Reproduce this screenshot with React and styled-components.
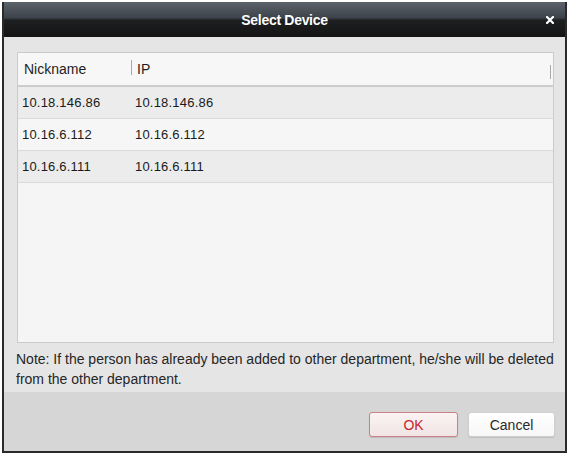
import React from "react";
import styled, { createGlobalStyle } from "styled-components";

const GlobalStyle = createGlobalStyle`
  html, body {
    margin: 0;
    padding: 0;
    background: #ffffff;
  }
  body {
    font-family: "Liberation Sans", Arial, sans-serif;
  }
`;

const Window = styled.div`
  display: flex;
  flex-direction: column;
  width: 561px;
  height: 449px;
  margin: 2px 0 0 2px;
  border: 2px solid #2a2a2a;
  border-top: none;
  box-sizing: content-box;
  overflow: hidden;
`;

const TitleBar = styled.div`
  position: relative;
  display: flex;
  align-items: center;
  justify-content: center;
  height: 35px;
  flex-shrink: 0;
  margin: 0 -2px;
  background: linear-gradient(
    to bottom,
    #5c636b 0%,
    #3d434a 45%,
    #1e1f21 52%,
    #141414 100%
  );
`;

const Title = styled.span`
  color: #ffffff;
  font-size: 14px;
  font-weight: bold;
  letter-spacing: -0.3px;
`;

const CloseButton = styled.button`
  position: absolute;
  right: 13px;
  top: 14px;
  width: 8px;
  height: 8px;
  padding: 0;
  border: none;
  background: none;
  display: flex;
`;

const Content = styled.div`
  display: flex;
  flex-direction: column;
  height: 355px;
  flex-shrink: 0;
  padding: 15px 11px 0 13px;
  box-sizing: border-box;
  background: #e5e5e5;
`;

const TablePanel = styled.div`
  display: flex;
  flex-direction: column;
  height: 291px;
  flex-shrink: 0;
  border: 1px solid #cbcbcb;
  background: #f5f5f5;
  box-sizing: border-box;
`;

const HeaderRow = styled.div`
  position: relative;
  display: flex;
  align-items: center;
  height: 34px;
  flex-shrink: 0;
  background: #f7f7f7;
  border-bottom: 2px solid #cdcdcd;
  box-sizing: border-box;
  font-size: 14px;
  color: #1e1e1e;
`;

const HeaderCell = styled.div`
  position: relative;
  width: ${(p) => p.width || "auto"};
  flex: ${(p) => (p.width ? "none" : 1)};
  padding-left: ${(p) => p.pad || "5px"};
  box-sizing: border-box;

  &::before {
    content: "";
    display: ${(p) => (p.divider ? "block" : "none")};
    position: absolute;
    left: 0;
    top: -1px;
    width: 1px;
    height: 15px;
    background: #a9a9a9;
  }
`;

const EdgeMark = styled.div`
  position: absolute;
  right: 2px;
  top: 12px;
  width: 1px;
  height: 14px;
  background: #a9a9a9;
`;

const Row = styled.div`
  display: flex;
  align-items: center;
  height: 32px;
  flex-shrink: 0;
  background: ${(p) => (p.alt ? "#ececec" : "#f6f6f6")};
  border-bottom: 1px solid #dadada;
  box-sizing: border-box;
  font-size: 13px;
  color: #1a1a1a;
  letter-spacing: 0.2px;
`;

const Cell = styled.div`
  width: ${(p) => p.width || "auto"};
  flex: ${(p) => (p.width ? "none" : 1)};
  padding-left: ${(p) => p.pad || "4px"};
  box-sizing: border-box;
`;

const Note = styled.p`
  margin: 6px 0 0 -1px;
  font-size: 14px;
  line-height: 20px;
  color: #262626;
  letter-spacing: 0;
`;

const Footer = styled.div`
  display: flex;
  justify-content: flex-end;
  align-items: flex-start;
  gap: 10px;
  flex: 1;
  padding: 20px 10px 0 0;
  background: #d6d6d6;
`;

const Button = styled.button`
  height: 25px;
  width: ${(p) => p.width};
  padding: 0;
  border-radius: 3px;
  font-family: "Liberation Sans", Arial, sans-serif;
  font-size: 14px;
  border: 1px solid ${(p) => (p.primary ? "#c98086" : "#cfcfcf")};
  color: ${(p) => (p.primary ? "#c1272d" : "#2a2a2a")};
  background: ${(p) =>
    p.primary
      ? "linear-gradient(to bottom, #fbf4f4, #f1e4e4)"
      : "linear-gradient(to bottom, #ffffff, #f7f7f7)"};
  box-shadow: 0 1px 1px rgba(0, 0, 0, 0.12);
`;

const devices = [
  { nickname: "10.18.146.86", ip: "10.18.146.86" },
  { nickname: "10.16.6.112", ip: "10.16.6.112" },
  { nickname: "10.16.6.111", ip: "10.16.6.111" },
];

export default function App() {
  return (
    <>
      <GlobalStyle />
      <Window>
        <TitleBar>
          <Title>Select Device</Title>
          <CloseButton>
            <svg width="8" height="8" viewBox="0 0 8 8">
              <path
                d="M1 1 L7 7 M7 1 L1 7"
                stroke="#ffffff"
                strokeWidth="2.2"
                strokeLinecap="square"
              />
            </svg>
          </CloseButton>
        </TitleBar>
        <Content>
          <TablePanel>
            <HeaderRow>
              <HeaderCell width="113px" pad="6px">Nickname</HeaderCell>
              <HeaderCell divider pad="6px">IP</HeaderCell>
              <EdgeMark />
            </HeaderRow>
            {devices.map((d, i) => (
              <Row key={d.ip} alt={i % 2 === 0}>
                <Cell width="113px">{d.nickname}</Cell>
                <Cell pad="4px">{d.ip}</Cell>
              </Row>
            ))}
          </TablePanel>
          <Note>
            Note: If the person has already been added to other department,
            he/she will be deleted from the other department.
          </Note>
        </Content>
        <Footer>
          <Button primary width="89px">OK</Button>
          <Button width="87px">Cancel</Button>
        </Footer>
      </Window>
    </>
  );
}
